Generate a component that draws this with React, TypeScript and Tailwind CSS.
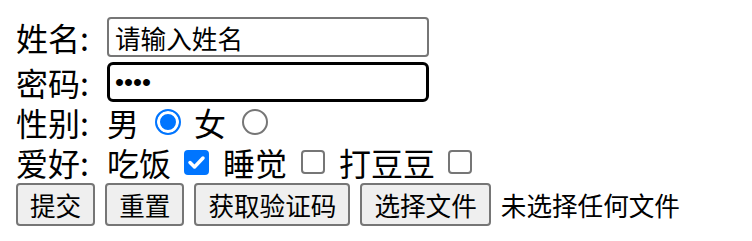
import React from "react"

function Radio({ checked }: { checked?: boolean }) {
  return (
    <span
      className={
        checked
          ? "inline-block w-[26px] h-[26px] rounded-full border-2 border-[#0075ff] bg-[#0075ff] shadow-[inset_0_0_0_3px_white]"
          : "inline-block w-[26px] h-[26px] rounded-full border-2 border-[#767676] bg-white"
      }
    />
  )
}

function Checkbox({ checked }: { checked?: boolean }) {
  if (checked) {
    return (
      <span className="inline-flex w-[25px] h-[25px] rounded-[4px] bg-[#0075ff] items-center justify-center">
        <svg width="25" height="25" viewBox="0 0 25 25" fill="none">
          <path d="M6 12.5l4.5 4.5L19 8" stroke="white" strokeWidth="3.5" strokeLinecap="round" strokeLinejoin="round" />
        </svg>
      </span>
    )
  }
  return <span className="inline-block w-[24px] h-[24px] rounded-[4px] border-2 border-[#767676] bg-white" />
}

function Label({ children }: { children: React.ReactNode }) {
  return <span className="w-[91px] shrink-0 whitespace-nowrap">{children}</span>
}

export default function App() {
  return (
    <div className="w-[752px] h-[241px] bg-white text-black font-['Noto_Sans_CJK_SC',sans-serif] text-[32px] leading-[32px] pl-4 pt-[17px] overflow-hidden">
      {/* 姓名 */}
      <div className="flex items-center h-[40px]">
        <Label>姓名:</Label>
        <input
          type="text"
          defaultValue="请输入姓名"
          className="w-[322px] h-[40px] border-2 border-[#767676] rounded-[4px] pl-[6px] text-[25.6px] leading-[30px] text-black font-['Noto_Sans_CJK_SC',sans-serif] outline-none"
        />
      </div>

      {/* 密码 */}
      <div className="flex items-center h-[40px] mt-[5px]">
        <Label>密码:</Label>
        <input
          type="password"
          defaultValue="1234"
          className="w-[322px] h-[40px] border-[3px] border-black rounded-[6px] pl-[5px] text-[25.6px] leading-[30px] text-black font-['Liberation_Sans',sans-serif] outline-none"
        />
      </div>

      {/* 性别 */}
      <div className="flex items-center h-[40px]">
        <Label>性别:</Label>
        <span>男</span>
        <span className="ml-[16px] mr-[13px] flex">
          <Radio checked />
        </span>
        <span>女</span>
        <span className="ml-[16px] flex">
          <Radio />
        </span>
      </div>

      {/* 爱好 */}
      <div className="flex items-center h-[40px]">
        <Label>爱好:</Label>
        <span>吃饭</span>
        <span className="ml-[13px] mr-[14px] flex">
          <Checkbox checked />
        </span>
        <span>睡觉</span>
        <span className="ml-[14px] mr-[14px] flex">
          <Checkbox />
        </span>
        <span>打豆豆</span>
        <span className="ml-[13px] flex">
          <Checkbox />
        </span>
      </div>

      {/* 按钮 */}
      <div className="flex items-center gap-[10px] h-[43px] mt-[1px] text-[25.6px]">
        <button className="h-[43px] px-[12px] border-2 border-[#767676] rounded-[4px] bg-[#efefef] leading-[30px]">提交</button>
        <button className="h-[43px] px-[12px] border-2 border-[#767676] rounded-[4px] bg-[#efefef] leading-[30px]">重置</button>
        <button className="h-[43px] px-[12px] border-2 border-[#767676] rounded-[4px] bg-[#efefef] leading-[30px]">获取验证码</button>
        <button className="h-[43px] px-[12px] border-2 border-[#767676] rounded-[4px] bg-[#efefef] leading-[30px]">选择文件</button>
        <span className="leading-[30px]">未选择任何文件</span>
      </div>
    </div>
  )
}
